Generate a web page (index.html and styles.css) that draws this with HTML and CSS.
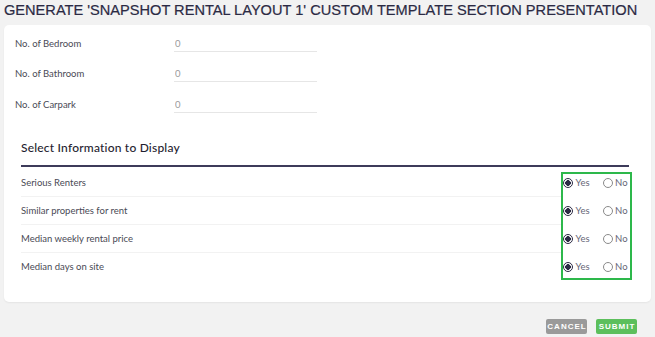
FILE: index.html
```html
<!DOCTYPE html>
<html lang="en">

<head>
    <meta charset="UTF-8">
    <meta name="viewport" content="width=device-width, initial-scale=1.0">
    <title>Custom Template Section Presentation</title>
    <link rel="stylesheet" href="styles.css">
</head>

<body>

    <h1 class="page-title">GENERATE 'SNAPSHOT RENTAL LAYOUT 1' CUSTOM TEMPLATE SECTION PRESENTATION</h1>

    <div class="card">
        <div class="form-row">
            <label>No. of Bedroom</label>
            <input type="text" value="0">
        </div>
        <div class="form-row">
            <label>No. of Bathroom</label>
            <input type="text" value="0">
        </div>
        <div class="form-row">
            <label>No. of Carpark</label>
            <input type="text" value="0">
        </div>

        <section class="info-section">
            <h2>Select Information to Display</h2>
            <div class="info-list">
                <div class="info-labels">
                    <div class="info-row">Serious Renters</div>
                    <div class="info-row">Similar properties for rent</div>
                    <div class="info-row">Median weekly rental price</div>
                    <div class="info-row last">Median days on site</div>
                </div>
                <div class="info-options">
                    <div class="option-row">
                        <label><input type="radio" name="renters" checked> Yes</label>
                        <label><input type="radio" name="renters"> No</label>
                    </div>
                    <div class="option-row">
                        <label><input type="radio" name="similar" checked> Yes</label>
                        <label><input type="radio" name="similar"> No</label>
                    </div>
                    <div class="option-row">
                        <label><input type="radio" name="weekly" checked> Yes</label>
                        <label><input type="radio" name="weekly"> No</label>
                    </div>
                    <div class="option-row">
                        <label><input type="radio" name="days" checked> Yes</label>
                        <label><input type="radio" name="days"> No</label>
                    </div>
                </div>
            </div>
        </section>
    </div>

    <div class="actions">
        <button class="btn btn-cancel">CANCEL</button>
        <button class="btn btn-submit">SUBMIT</button>
    </div>

</body>

</html>
```

FILE: styles.css
```css
body {
    font-family: 'Lato', sans-serif;
    margin: 0;
    padding: 0 4px;
    background-color: #f2f2f2;
    color: #4a4a55;
}

.page-title {
    font-family: 'Liberation Sans', Arial, sans-serif;
    font-weight: normal;
    font-size: 14.6px;
    line-height: 20px;
    color: #2b2a44;
    margin: 0 0 5px 0;
    white-space: nowrap;
    -webkit-text-stroke: 0.2px #2b2a44;
}

.card {
    background-color: #fff;
    border-radius: 5px;
    box-shadow: 0 1px 2px rgba(0, 0, 0, 0.06);
    width: 647px;
    padding: 3px 0 21px 0;
}

.form-row {
    display: flex;
    align-items: center;
    height: 30.5px;
    padding-left: 11px;
}

.form-row label {
    width: 159px;
    font-size: 9.5px;
    color: #4a4a55;
}

.form-row input {
    width: 142px;
    border: none;
    border-bottom: 1px solid #e6e6e6;
    padding: 0 0 2px 1px;
    font-family: 'Lato', sans-serif;
    font-size: 9.5px;
    color: #9a9a9a;
    outline: none;
    margin-top: 3px;
}

.info-section {
    margin: 20px 22px 0 17px;
}

.info-section h2 {
    font-size: 12px;
    font-weight: 500;
    letter-spacing: 0.2px;
    color: #1f1e30;
    margin: 0;
    line-height: 16px;
    padding-bottom: 9px;
    border-bottom: 2px solid #3d3b5a;
}

.info-list {
    display: flex;
    margin-top: 2px;
}

.info-labels {
    flex: 1;
}

.info-row {
    height: 27px;
    line-height: 28px;
    border-bottom: 1px solid #f2f2f2;
    font-size: 9.5px;
    color: #4a4a55;
}

.info-row.last {
    border-bottom: none;
    height: 28px;
}

.info-options {
    position: relative;
    width: 67px;
}

/* highlight frame drawn over the radio column */
.info-options::after {
    content: "";
    position: absolute;
    top: 3px;
    bottom: 1px;
    left: -1px;
    right: -3px;
    border: 2px solid #2db84b;
}

.option-row {
    display: flex;
    align-items: center;
    height: 28px;
    padding-left: 1px;
    gap: 13px;
}

.option-row label {
    display: flex;
    align-items: center;
    gap: 2.5px;
    font-size: 9.5px;
    color: #666677;
}

.option-row input {
    appearance: none;
    -webkit-appearance: none;
    width: 10px;
    height: 10px;
    margin: 0;
    border: 1px solid #8a8a8a;
    border-radius: 50%;
    background: #fff;
}

.option-row input:checked {
    border-color: #2b2a44;
    background: radial-gradient(circle, #2b2a44 0 2.6px, #fff 3px);
}

.actions {
    display: flex;
    justify-content: flex-end;
    gap: 9px;
    margin: 17px 14px 0 0;
}

.btn {
    border: none;
    border-radius: 2px;
    color: white;
    font-family: 'Liberation Sans', Arial, sans-serif;
    font-weight: bold;
    font-size: 8px;
    letter-spacing: 1px;
    width: 41px;
    height: 15px;
    padding: 0 0 0 1px;
    cursor: pointer;
}

.btn-cancel {
    background-color: #9a9a9a;
}

.btn-submit {
    background-color: #5cbf5c;
}
```
